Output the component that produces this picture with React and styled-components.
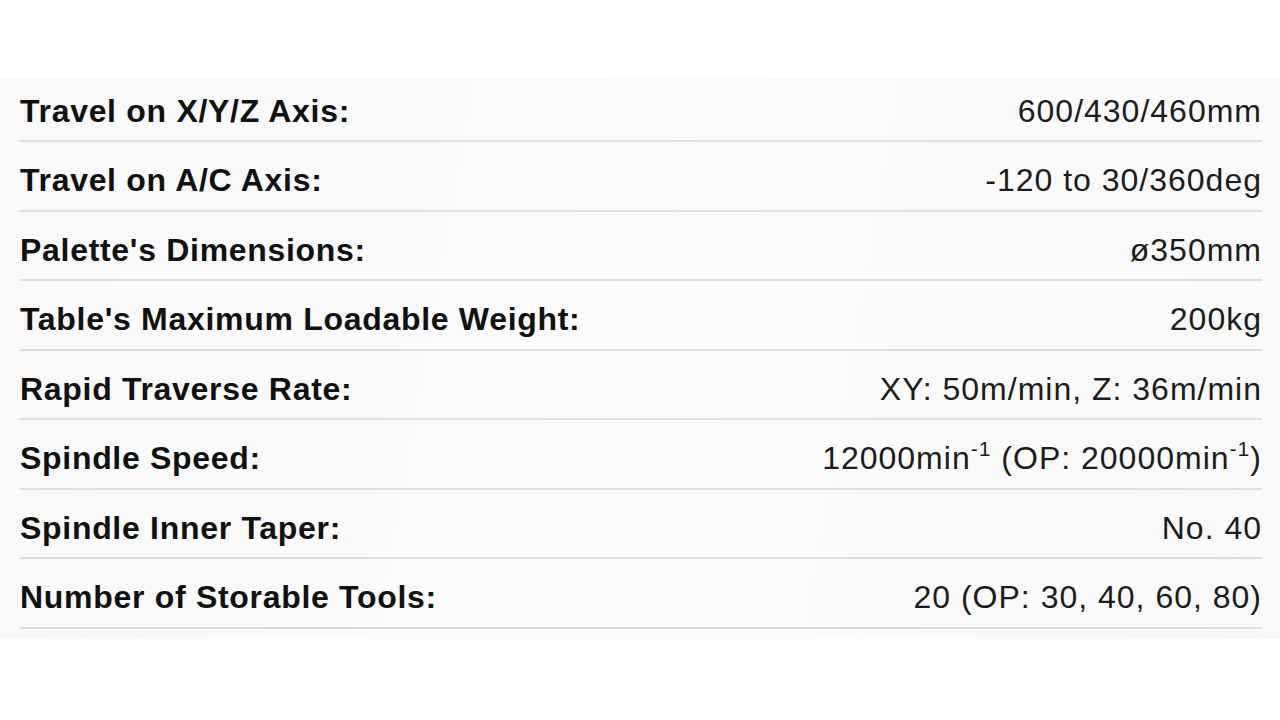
import React from 'react';
import styled, { createGlobalStyle } from 'styled-components';

const GlobalStyle = createGlobalStyle`
  html, body {
    margin: 0;
    padding: 0;
    background: #ffffff;
  }
  body {
    font-family: "Liberation Sans", Arial, sans-serif;
  }
`;

const Page = styled.div`
  width: 1280px;
  height: 720px;
  background: #ffffff;
  padding-top: 78px;
  box-sizing: border-box;
`;

const SpecPanel = styled.div`
  background: linear-gradient(100deg, #f8f8f8 0%, #fbfbfb 50%, #f8f8f8 100%);
  padding: 0 18px 10px 20px;
`;

const SpecRow = styled.div`
  display: flex;
  justify-content: space-between;
  align-items: center;
  height: 69.5px;
  box-sizing: border-box;
  padding-top: 10px;
  border-bottom: 2px solid #dedede;

  &:first-child {
    height: 64px;
    padding-top: 5px;
  }
`;

const Label = styled.span`
  font-family: "Liberation Sans", Arial, sans-serif;
  font-size: 32px;
  font-weight: bold;
  color: #111111;
  letter-spacing: 0.7px;
`;

const Value = styled.span`
  font-family: "Liberation Sans", Arial, sans-serif;
  font-size: 32px;
  color: #1c1c1c;
  letter-spacing: 1px;
`;

const Sup = styled.sup`
  font-size: 0.66em;
  vertical-align: 0.6em;
  line-height: 0;
`;

const specs = [
  { label: 'Travel on X/Y/Z Axis:', value: '600/430/460mm' },
  { label: 'Travel on A/C Axis:', value: '-120 to 30/360deg' },
  { label: "Palette's Dimensions:", value: 'ø350mm' },
  { label: "Table's Maximum Loadable Weight:", value: '200kg' },
  { label: 'Rapid Traverse Rate:', value: 'XY: 50m/min, Z: 36m/min' },
  {
    label: 'Spindle Speed:',
    value: (
      <>
        12000min<Sup>-1</Sup> (OP: 20000min<Sup>-1</Sup>)
      </>
    ),
  },
  { label: 'Spindle Inner Taper:', value: 'No. 40' },
  { label: 'Number of Storable Tools:', value: '20 (OP: 30, 40, 60, 80)' },
];

const App = () => {
  return (
    <>
      <GlobalStyle />
      <Page>
        <SpecPanel>
          {specs.map((s) => (
            <SpecRow key={s.label}>
              <Label>{s.label}</Label>
              <Value>{s.value}</Value>
            </SpecRow>
          ))}
        </SpecPanel>
      </Page>
    </>
  );
};

export default App;
